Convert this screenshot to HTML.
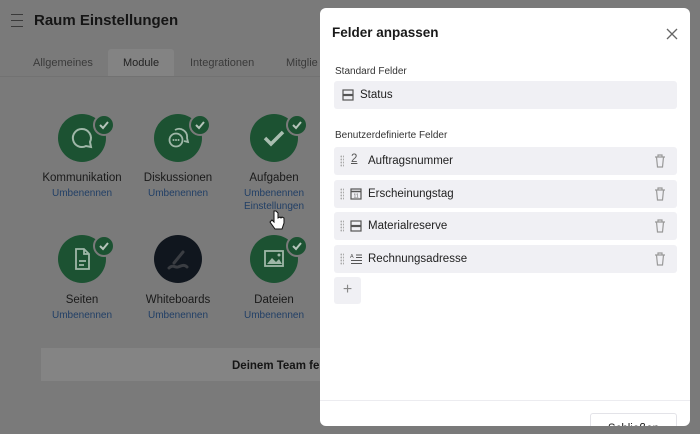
<!DOCTYPE html>
<html><head><meta charset="utf-8"><style>
*{box-sizing:border-box;margin:0;padding:0}
body{width:700px;height:434px;overflow:hidden;background:#7a7a7a;font-family:"Liberation Sans",sans-serif;position:relative;color:#151515}
.abs{position:absolute}
.circ{position:absolute;width:48px;height:48px;border-radius:50%;background:#1c5232}
.badge{position:absolute;width:22px;height:22px;border-radius:50%;background:#1c5232;border:2px solid #7a7a7a}
.lbl{position:absolute;width:110px;text-align:center;font-size:11.5px;color:#1a1a1a}
.lnk{position:absolute;width:110px;text-align:center;font-size:10px;color:#213f66;line-height:13px}
.modal{position:absolute;left:320px;top:8px;width:370px;height:418px;background:#fff;border-radius:6px;overflow:hidden}
.row{position:absolute;left:14px;width:343px;height:28px;background:#f0f0f4;border-radius:3px;font-size:11.5px;color:#222}
.row span.t{position:absolute;left:34px;top:8px}
.drag{position:absolute;left:6px;top:8px;width:4px;height:12px;background-image:radial-gradient(circle,#aaa 0.8px,transparent 1px);background-size:2.5px 3px}
.trash{position:absolute;right:11px;top:7px}
</style></head><body>
<div class="abs" style="left:11px;top:14px;width:12px;height:1px;background:#3a3a3a"></div>
<div class="abs" style="left:11px;top:20px;width:12px;height:1px;background:#3a3a3a"></div>
<div class="abs" style="left:11px;top:26px;width:12px;height:1px;background:#3a3a3a"></div>
<div class="abs" style="left:34px;top:12px;font-size:15px;font-weight:bold;color:#151515">Raum Einstellungen</div>
<div class="abs" style="left:108px;top:49px;width:66px;height:28px;background:#838383;border-radius:3px 3px 0 0"></div>
<div class="abs" style="left:0;top:76px;width:320px;height:1px;background:#727272"></div>
<div class="abs" style="left:33px;top:57px;font-size:11px;color:#3a3a3a">Allgemeines</div>
<div class="abs" style="left:123px;top:57px;font-size:11px;color:#222">Module</div>
<div class="abs" style="left:190px;top:57px;font-size:11px;color:#3a3a3a">Integrationen</div>
<div class="abs" style="left:286px;top:57px;font-size:11px;color:#3a3a3a">Mitglie</div>

<div class="circ" style="left:58px;top:114px"><svg width="48" height="48"><path d="M24 15a9 9 0 1 0 4 17l5 1-1-5a9 9 0 0 0-8-13z" fill="none" stroke="#9fb7a8" stroke-width="2"/></svg></div>
<div class="badge" style="left:93px;top:114px"><svg width="18" height="18"><path d="M5 9l3 3 5-6" fill="none" stroke="#b5c4ba" stroke-width="2"/></svg></div>
<div class="circ" style="left:154px;top:114px"><svg width="48" height="48"><path d="M21 16a8 8 0 0 1 12 8l1 4-4-1" fill="none" stroke="#9fb7a8" stroke-width="1.8"/><circle cx="22" cy="26" r="6.5" fill="none" stroke="#9fb7a8" stroke-width="1.8"/><circle cx="19.5" cy="26" r="1" fill="#9fb7a8"/><circle cx="22" cy="26" r="1" fill="#9fb7a8"/><circle cx="24.5" cy="26" r="1" fill="#9fb7a8"/></svg></div>
<div class="badge" style="left:189px;top:114px"><svg width="18" height="18"><path d="M5 9l3 3 5-6" fill="none" stroke="#b5c4ba" stroke-width="2"/></svg></div>
<div class="circ" style="left:250px;top:114px"><svg width="48" height="48"><path d="M15 24l6 6 12-12" fill="none" stroke="#a9bdb0" stroke-width="3.5"/></svg></div>
<div class="badge" style="left:286px;top:114px"><svg width="18" height="18"><path d="M5 9l3 3 5-6" fill="none" stroke="#b5c4ba" stroke-width="2"/></svg></div>
<div class="lbl" style="left:27px;top:172px">Kommunikation</div><div class="lnk" style="left:27px;top:187px">Umbenennen</div>
<div class="lbl" style="left:123px;top:172px">Diskussionen</div><div class="lnk" style="left:123px;top:187px">Umbenennen</div>
<div class="lbl" style="left:219px;top:172px">Aufgaben</div><div class="lnk" style="left:219px;top:187px">Umbenennen<br>Einstellungen</div>
<svg class="abs" style="left:269px;top:210px" width="16" height="22"><path d="M5 1v11l-2-2-2 2 5 7h7l2-6v-5l-2-1-1 1-1-1-2 1V3l-2-2z" fill="#fff" stroke="#111" stroke-width="1"/></svg>

<div class="circ" style="left:58px;top:235px"><svg width="48" height="48"><path d="M18 14h8l5 5v15H18z M26 14v5h5 M21 26h7 M21 30h5" fill="none" stroke="#9fb7a8" stroke-width="1.8"/></svg></div>
<div class="badge" style="left:93px;top:235px"><svg width="18" height="18"><path d="M5 9l3 3 5-6" fill="none" stroke="#b5c4ba" stroke-width="2"/></svg></div>
<div class="circ" style="left:154px;top:235px;background:#10161e"><svg width="48" height="48"><path d="M20 28l9-11 M15 33c4-4 6 0 9-1s6-3 9 0" fill="none" stroke="#3a3d42" stroke-width="3" stroke-linecap="round"/></svg></div>
<div class="circ" style="left:250px;top:235px"><svg width="48" height="48"><rect x="15" y="16" width="18" height="15" fill="none" stroke="#9fb7a8" stroke-width="1.8"/><path d="M17 29l5-6 4 4 3-3 3 5z" fill="#9fb7a8"/><circle cx="29" cy="20" r="1.5" fill="#9fb7a8"/></svg></div>
<div class="badge" style="left:286px;top:235px"><svg width="18" height="18"><path d="M5 9l3 3 5-6" fill="none" stroke="#b5c4ba" stroke-width="2"/></svg></div>
<div class="lbl" style="left:27px;top:294px">Seiten</div><div class="lnk" style="left:27px;top:309px">Umbenennen</div>
<div class="lbl" style="left:123px;top:294px">Whiteboards</div><div class="lnk" style="left:123px;top:309px">Umbenennen</div>
<div class="lbl" style="left:219px;top:294px">Dateien</div><div class="lnk" style="left:219px;top:309px">Umbenennen</div>

<div class="abs" style="left:41px;top:348px;width:290px;height:33px;background:#848484"></div>
<div class="abs" style="left:232px;top:360px;font-size:11.5px;font-weight:bold;color:#151515">Deinem Team feh</div>

<div class="modal">
 <div class="abs" style="left:12px;top:17px;font-size:13.5px;font-weight:bold;color:#1a1a1a">Felder anpassen</div>
 <svg class="abs" style="left:346px;top:20px" width="12" height="12"><path d="M1 1l10 10M11 1L1 11" stroke="#666" stroke-width="1.3"/></svg>
 <div class="abs" style="left:15px;top:58px;font-size:10px;color:#333">Standard Felder</div>
 <div class="row" style="top:73px"><svg class="abs" style="left:8px;top:8px" width="12" height="12"><rect x="1" y="1" width="10" height="4.5" fill="none" stroke="#555" stroke-width="1.2"/><rect x="1" y="6.5" width="10" height="4.5" fill="none" stroke="#555" stroke-width="1.2"/></svg><span class="t" style="left:26px">Status</span></div>
 <div class="abs" style="left:15px;top:122px;font-size:10px;color:#333">Benutzerdefinierte Felder</div>
 <div class="row" style="top:139px"><div class="drag"></div><span class="abs" style="left:17px;top:6px;font-size:11.5px;color:#555;text-decoration:underline">2</span><span class="t">Auftragsnummer</span><svg class="trash" width="12" height="14"><path d="M1 3h10M4 3V1h4v2M2.5 3l1 10h5l1-10" fill="none" stroke="#999" stroke-width="1.2"/></svg></div>
 <div class="row" style="top:172px"><div class="drag"></div><svg class="abs" style="left:16px;top:8px" width="12" height="12"><rect x="1" y="1" width="10" height="10" fill="none" stroke="#555" stroke-width="1.2"/><path d="M1 3.5h10" stroke="#555" stroke-width="1.5"/><text x="3.5" y="9.5" font-size="5" fill="#555" font-family="Liberation Sans">11</text></svg><span class="t">Erscheinungstag</span><svg class="trash" width="12" height="14"><path d="M1 3h10M4 3V1h4v2M2.5 3l1 10h5l1-10" fill="none" stroke="#999" stroke-width="1.2"/></svg></div>
 <div class="row" style="top:204px"><div class="drag"></div><svg class="abs" style="left:16px;top:8px" width="12" height="12"><rect x="1" y="1" width="10" height="4.5" fill="none" stroke="#555" stroke-width="1.2"/><rect x="1" y="6.5" width="10" height="4.5" fill="none" stroke="#555" stroke-width="1.2"/></svg><span class="t">Materialreserve</span><svg class="trash" width="12" height="14"><path d="M1 3h10M4 3V1h4v2M2.5 3l1 10h5l1-10" fill="none" stroke="#999" stroke-width="1.2"/></svg></div>
 <div class="row" style="top:237px"><div class="drag"></div><svg class="abs" style="left:16px;top:8px" width="13" height="12"><text x="0" y="5" font-size="5.5" fill="#555" font-family="Liberation Sans">A</text><path d="M6 2h6M6 4.5h6M1 7.5h11M1 10.5h11" stroke="#555" stroke-width="1"/></svg><span class="t">Rechnungsadresse</span><svg class="trash" width="12" height="14"><path d="M1 3h10M4 3V1h4v2M2.5 3l1 10h5l1-10" fill="none" stroke="#999" stroke-width="1.2"/></svg></div>
 <div class="abs" style="left:14px;top:269px;width:27px;height:27px;background:#f0f0f4;border-radius:3px;text-align:center;line-height:26px;font-size:16px;color:#888">+</div>
 <div class="abs" style="left:0;top:392px;width:370px;height:1px;background:#ececf0"></div>
 <div class="abs" style="left:270px;top:405px;width:87px;height:24px;border:1px solid #e3e3e8;border-radius:3px;font-size:11.5px;text-align:center;padding-top:9px;color:#222">Schließen</div>
</div>
</body></html>
